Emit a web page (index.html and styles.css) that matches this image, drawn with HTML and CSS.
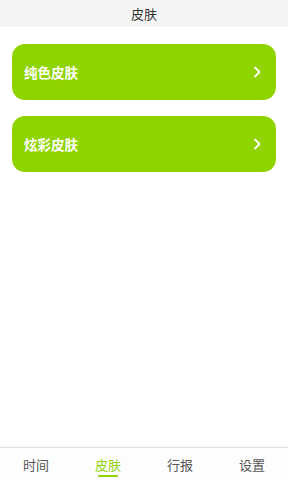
FILE: index.html
```html
<!DOCTYPE html>
<html lang="zh">
<head>
<meta charset="utf-8">
<link rel="stylesheet" href="styles.css">
</head>
<body>
<div class="app">
  <header class="topbar">皮肤</header>
  <main class="list">
    <div class="card">
      <span class="card-title">纯色皮肤</span>
      <svg class="chev" width="10" height="14" viewBox="0 0 10 14"><path d="M3 2.5 L7.5 7 L3 11.5" fill="none" stroke="#fff" stroke-width="1.8" stroke-linecap="round" stroke-linejoin="round"/></svg>
    </div>
    <div class="card">
      <span class="card-title">炫彩皮肤</span>
      <svg class="chev" width="10" height="14" viewBox="0 0 10 14"><path d="M3 2.5 L7.5 7 L3 11.5" fill="none" stroke="#fff" stroke-width="1.8" stroke-linecap="round" stroke-linejoin="round"/></svg>
    </div>
  </main>
  <nav class="tabbar">
    <div class="tab">时间</div>
    <div class="tab active">皮肤<span class="bar"></span></div>
    <div class="tab">行报</div>
    <div class="tab">设置</div>
  </nav>
</div>
</body>
</html>
```

FILE: styles.css
```css
* { box-sizing: border-box; }
html, body { margin: 0; padding: 0; }
body {
  width: 288px;
  height: 480px;
  background: #fff;
  font-family: "Noto Sans CJK SC", "Noto Sans", sans-serif;
  overflow: hidden;
}
.app {
  height: 480px;
  display: flex;
  flex-direction: column;
}
.topbar {
  height: 27px;
  background: #f5f5f5;
  color: #333;
  font-size: 13px;
  line-height: 27px;
  text-align: center;
}
.list {
  flex: 1;
  padding: 17px 12px 0;
  display: flex;
  flex-direction: column;
  gap: 16px;
}
.card {
  height: 56px;
  border-radius: 13px;
  background: #8fd400;
  display: flex;
  align-items: center;
  justify-content: space-between;
  padding: 0 14px 0 12px;
  color: #fff;
}
.card-title {
  font-size: 13.5px;
  font-weight: 700;
}
.chev { display: block; }
.tabbar {
  height: 33px;
  border-top: 1px solid #e6e6e6;
  background: #fdfdfd;
  display: grid;
  grid-template-columns: repeat(4, 1fr);
  box-shadow: 0 -1px 2px rgba(0,0,0,0.04);
}
.tab {
  position: relative;
  text-align: center;
  font-size: 13px;
  color: #555;
  line-height: 18px;
  padding-top: 8px;
}
.tab.active { color: #8fd400; }
.tab .bar {
  position: absolute;
  left: 50%;
  top: 27px;
  width: 20px;
  height: 2px;
  margin-left: -10px;
  background: #8fd400;
  border-radius: 1px;
}
```
